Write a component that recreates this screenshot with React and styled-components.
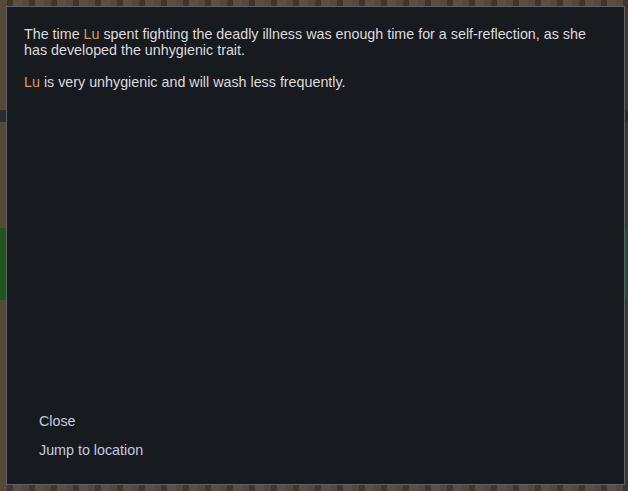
import styled, { createGlobalStyle } from 'styled-components'

const GlobalStyle = createGlobalStyle`
  html, body {
    margin: 0;
    padding: 0;
    height: 100%;
  }
  body {
    font-family: 'Liberation Sans', Arial, sans-serif;
    background-color: #4a3f30;
    background-image:
      linear-gradient(180deg, transparent 0 110px, #2b2b2b 110px 122px, transparent 122px 228px, #23531f 228px 300px, transparent 300px),
      repeating-linear-gradient(90deg, #55493a 0 7px, #3f3529 7px 13px, #5c4f3d 13px 22px),
      repeating-linear-gradient(0deg, rgba(0,0,0,0.15) 0 3px, transparent 3px 9px);
  }
`

const Page = styled.div`
  width: 628px;
  height: 491px;
  box-sizing: border-box;
  padding: 6px 3px 6px 6px;
  display: flex;
`

const Dialog = styled.div`
  flex: 1;
  display: flex;
  flex-direction: column;
  justify-content: space-between;
  background: #171a1f;
  border: 1px solid #5b636e;
  padding: 19px 17px 26px 17px;
  box-sizing: border-box;
`

const Body = styled.div`
  color: #dcdcdc;
  font-size: 14.3px;
  line-height: 16px;
`

const Para = styled.p`
  margin: 0 0 16px 0;
`

const Name = styled.span`
  color: #d69a58;
`

const Actions = styled.div`
  display: flex;
  flex-direction: column;
  gap: 13px;
  padding-left: 15px;
`

const Action = styled.button`
  background: transparent;
  border: none;
  padding: 0;
  text-align: left;
  font-family: inherit;
  font-size: 14.3px;
  line-height: 16px;
  color: #c6cbe0;
  cursor: pointer;
`

export default function App() {
  return (
    <>
      <GlobalStyle />
      <Page>
        <Dialog>
          <Body>
            <Para>
              The time <Name>Lu</Name> spent fighting the deadly illness was enough time for a
              self-reflection, as she has developed the unhygienic trait.
            </Para>
            <Para>
              <Name>Lu</Name> is very unhygienic and will wash less frequently.
            </Para>
          </Body>
          <Actions>
            <Action>Close</Action>
            <Action>Jump to location</Action>
          </Actions>
        </Dialog>
      </Page>
    </>
  )
}
